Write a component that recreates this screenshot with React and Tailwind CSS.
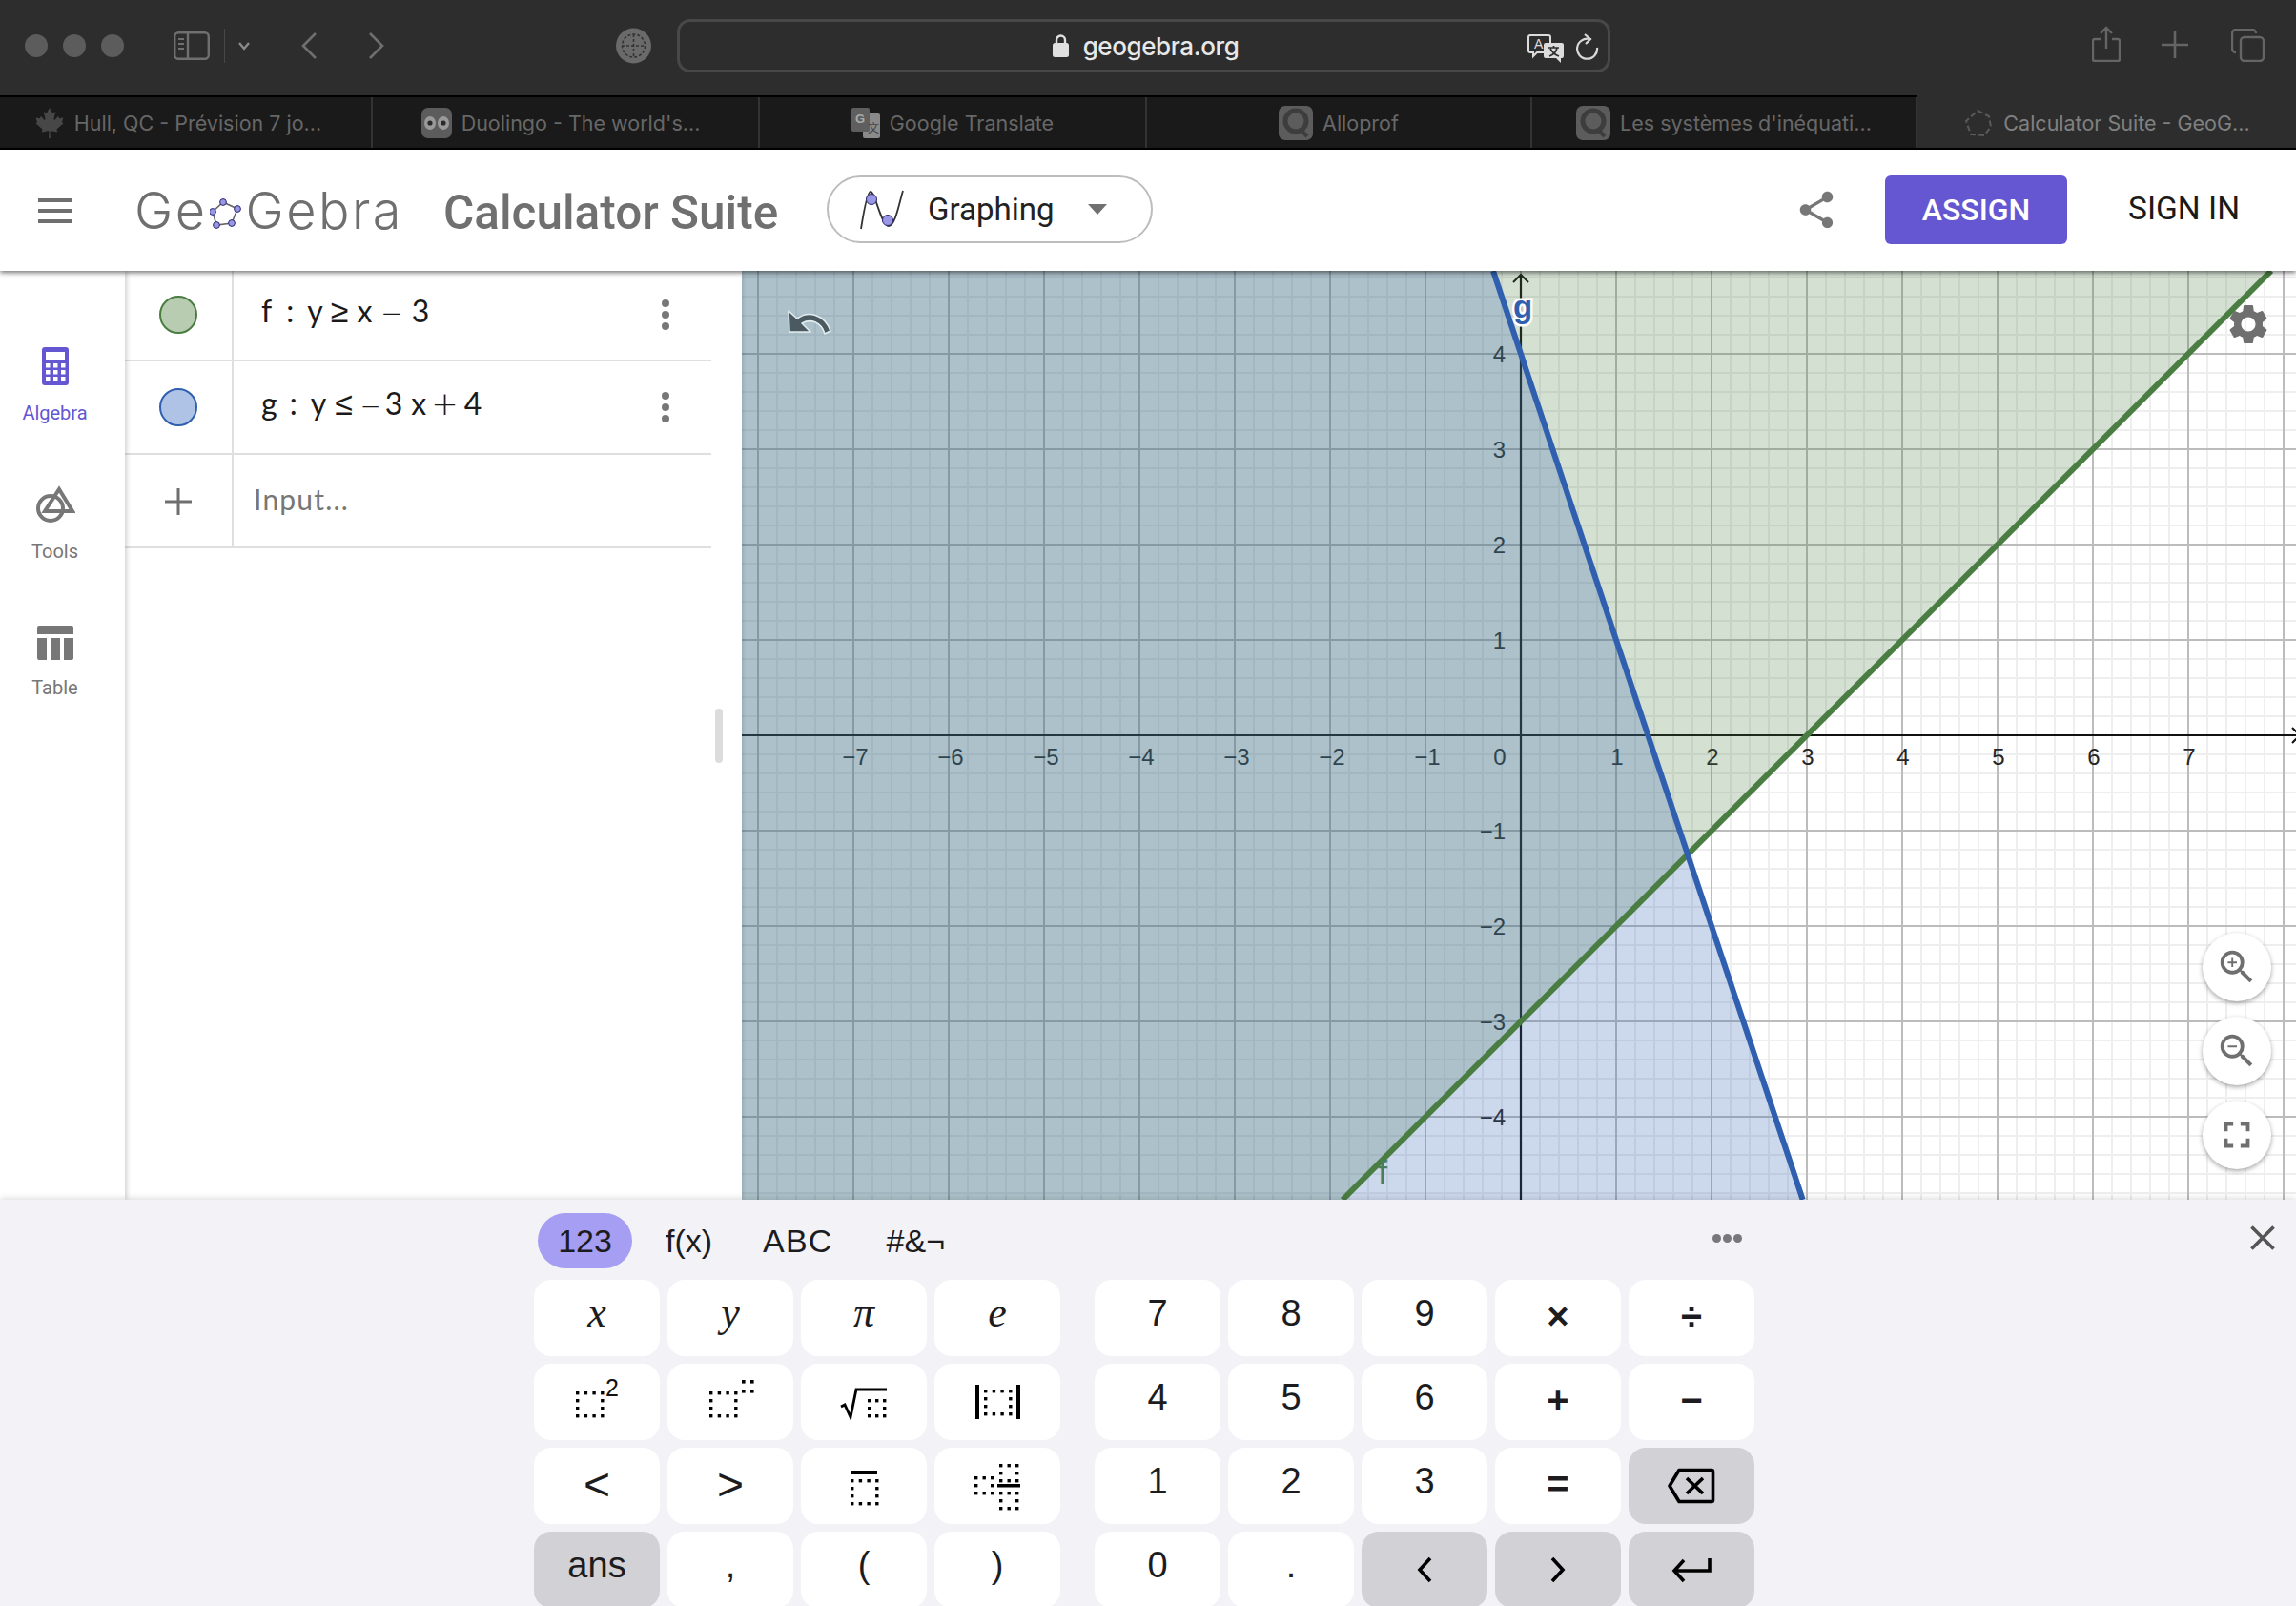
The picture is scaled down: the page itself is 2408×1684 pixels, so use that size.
import React from "react";
import { MdSettings, MdZoomIn, MdZoomOut, MdFullscreen, MdClose, MdShare } from "react-icons/md";
import { FaCanadianMapleLeaf } from "react-icons/fa";

const range = (a, b, s = 1) => { const r = []; for (let i = a; i <= b; i += s) r.push(i); return r; };

function Dots({ x, y, nx = 4, ny = 4, dx = 8.7, dy = 8, s = 3.4 }) {
  const out = [];
  for (let i = 0; i < nx; i++) for (let j = 0; j < ny; j++) {
    if (i === 0 || j === 0 || i === nx - 1 || j === ny - 1) out.push(<rect key={i + "-" + j} x={x + i * dx} y={y + j * dy} width={s} height={s} fill="#000" />);
  }
  return <g>{out}</g>;
}

function KeyGlyph({ children }) {
  return <svg width="132" height="80" viewBox="0 0 132 80">{children}</svg>;
}

const glyphs = {
  sq: <KeyGlyph><Dots x={44} y={29} /><text x={75} y={34} fontSize="25" fontFamily="Liberation Sans" fill="#111">2</text></KeyGlyph>,
  pow: <KeyGlyph><Dots x={44} y={29} /><Dots x={78} y={17} nx={2} ny={2} dx={9} dy={10} s={3.6} /></KeyGlyph>,
  sqrt: <KeyGlyph><path d="M42 45 L46 43 L52 56 L58 27 H90" fill="none" stroke="#000" strokeWidth="2.8" /><Dots x={70} y={37} nx={3} ny={3} dx={8} dy={8} /></KeyGlyph>,
  abs: <KeyGlyph><rect x={43} y={22} width={4} height={36} fill="#000" /><rect x={86} y={22} width={4} height={36} fill="#000" /><Dots x={52} y={27} /></KeyGlyph>,
  over: <KeyGlyph><rect x={52} y={24} width={28} height={4} fill="#000" /><Dots x={52} y={33} /></KeyGlyph>,
  mixed: <KeyGlyph>
    <Dots x={42} y={30} nx={3} ny={3} dx={8.5} dy={8} />
    <Dots x={68} y={17} nx={3} ny={3} dx={8.5} dy={8} />
    <rect x={66} y={38} width={24} height={3.5} fill="#000" />
    <Dots x={68} y={46} nx={3} ny={3} dx={8.5} dy={8} />
  </KeyGlyph>,
  back: <svg width="50" height="38" viewBox="0 0 50 38" fill="none" stroke="#000" strokeWidth="3.6"><path d="M12 2.5 H46 a1.5 1.5 0 0 1 1.5 1.5 V34 a1.5 1.5 0 0 1 -1.5 1.5 H12 L2 19 Z" strokeLinejoin="round" /><path d="M20 11 L37 27 M37 11 L20 27" /></svg>,
  left: <svg width="18" height="28" viewBox="0 0 18 28" fill="none" stroke="#000" strokeWidth="3.6"><path d="M15 2 L4 14 L15 26" /></svg>,
  right: <svg width="18" height="28" viewBox="0 0 18 28" fill="none" stroke="#000" strokeWidth="3.6"><path d="M3 2 L14 14 L3 26" /></svg>,
  enter: <svg width="42" height="28" viewBox="0 0 42 28" fill="none" stroke="#000" strokeWidth="3.6"><path d="M40 2 V15 H4" /><path d="M13 4 L3 15 L13 26" /></svg>,
};

function Key({ k }) {
  const base = "h-20 rounded-[18px] flex items-center justify-center text-[#1c1c1e] font-['Liberation_Sans',sans-serif] " + (k.gray ? "bg-[#d1d1d6]" : "bg-white");
  if (k.g) return <div className={base}>{glyphs[k.g]}</div>;
  if (k.it) return <div className={base + " font-['Liberation_Serif',serif] italic text-[44px] pb-[10px]"}>{k.t}</div>;
  if (k.cmp) return <div className={base + " text-[48px] pb-[2px]"}>{k.t}</div>;
  if (k.op) return <div className={base + " text-[40px] font-bold pb-1"}>{k.t}</div>;
  return <div className={base + " text-[38px] pb-[10px]"}>{k.t}</div>;
}

const leftKeys = [
  { t: "x", it: 1 }, { t: "y", it: 1 }, { t: "π", it: 1 }, { t: "e", it: 1 },
  { g: "sq" }, { g: "pow" }, { g: "sqrt" }, { g: "abs" },
  { t: "<", cmp: 1 }, { t: ">", cmp: 1 }, { g: "over" }, { g: "mixed" },
  { t: "ans", gray: 1 }, { t: "," }, { t: "(" }, { t: ")" },
];
const rightKeys = [
  { t: "7" }, { t: "8" }, { t: "9" }, { t: "×", op: 1 }, { t: "÷", op: 1 },
  { t: "4" }, { t: "5" }, { t: "6" }, { t: "+", op: 1 }, { t: "−", op: 1 },
  { t: "1" }, { t: "2" }, { t: "3" }, { t: "=", op: 1 }, { g: "back", gray: 1 },
  { t: "0" }, { t: "." }, { g: "left", gray: 1 }, { g: "right", gray: 1 }, { g: "enter", gray: 1 },
];

const AlloIcon = () => (
  <svg width="36" height="36" viewBox="0 0 36 36"><rect width="36" height="36" rx="7" fill="#5c5c5c" /><circle cx="18" cy="16" r="11" fill="none" stroke="#3d3d3d" strokeWidth="5" /><path d="M22 24 L30 32" stroke="#3d3d3d" strokeWidth="4" /></svg>
);

const tabs = [
  { w: "w-[391px] pr-[16px]", t: "Hull, QC - Prévision 7 jo...", ic: <FaCanadianMapleLeaf className="text-[#474747] text-[32px]" /> },
  { w: "w-[406px] pr-[10px]", t: "Duolingo - The world's...", ic: (
    <svg width="32" height="32" viewBox="0 0 32 32"><rect width="32" height="32" rx="7" fill="#5c5c5c" /><ellipse cx="9" cy="16" rx="6" ry="7" fill="#9a9a9a" /><ellipse cx="23" cy="16" rx="6" ry="7" fill="#9a9a9a" /><circle cx="9" cy="16" r="2.6" fill="#2a2a2a" /><circle cx="23" cy="16" r="2.6" fill="#2a2a2a" /></svg>
  ) },
  { w: "w-[406px]", t: "Google Translate", ic: (
    <svg width="30" height="32" viewBox="0 0 30 32"><rect x="12" y="6" width="18" height="26" rx="2" fill="#8a8a8a" /><rect width="19" height="25" rx="2" fill="#5f5f5f" /><text x="4" y="16" fontSize="13" fontWeight="700" fontFamily="Liberation Sans" fill="#aaa">G</text><text x="17" y="26" fontSize="12" fontFamily="Noto Sans CJK SC" fill="#444">文</text></svg>
  ) },
  { w: "w-[404px]", t: "Alloprof", ic: <AlloIcon /> },
  { w: "w-[404px]", t: "Les systèmes d'inéquati...", ic: <AlloIcon /> },
  { w: "flex-1", active: 1, t: "Calculator Suite - GeoG...", ic: (
    <svg width="32" height="32" viewBox="0 0 32 32" fill="none"><path d="M15 3 L27 9 L29 20 L22 29 L8 28 L3 14 Z" stroke="#5a5a5a" strokeWidth="2" strokeDasharray="6 3" /></svg>
  ) },
];

function Toolbar() {
  return (
    <div className="h-[100px] bg-[#2d2d2d] flex items-center relative shrink-0 pb-[5px]">
      <div className="flex gap-4 ml-[26px]">
        <div className="w-6 h-6 rounded-full bg-[#5c5c5c]" /><div className="w-6 h-6 rounded-full bg-[#5c5c5c]" /><div className="w-6 h-6 rounded-full bg-[#5c5c5c]" />
      </div>
      <svg className="ml-[52px]" width="38" height="30" viewBox="0 0 38 30" fill="none" stroke="#6f6f6f" strokeWidth="2.4"><rect x="1.2" y="1.2" width="35.6" height="27.6" rx="4" /><path d="M15 1 V29" /><path d="M5 8 H11 M5 13 H11 M5 18 H11" strokeWidth="2" /></svg>
      <div className="ml-[15px] w-px h-[36px] bg-[#474747]" />
      <svg className="ml-[14px]" width="12" height="10" viewBox="0 0 12 10" fill="none" stroke="#8a8a8a" strokeWidth="2.4"><path d="M1 2 L6 8 L11 2" /></svg>
      <svg className="ml-[53px]" width="18" height="30" viewBox="0 0 18 30" fill="none" stroke="#6f6f6f" strokeWidth="2.6"><path d="M16 2 L3 15 L16 28" /></svg>
      <svg className="ml-[53px]" width="18" height="30" viewBox="0 0 18 30" fill="none" stroke="#6f6f6f" strokeWidth="2.6"><path d="M2 2 L15 15 L2 28" /></svg>
      <svg className="ml-[242px]" width="37" height="38" viewBox="0 0 37 38"><circle cx="18.5" cy="19" r="18.5" fill="#6a6a6a" /><g fill="none" stroke="#333" strokeWidth="1.6" strokeDasharray="3 2"><circle cx="18.5" cy="19" r="12" /><path d="M6 19 H31 M18.5 7 V31" /></g></svg>
      <div className="ml-[27px] w-[979px] h-[56px] rounded-[14px] border-[3px] border-[#484848] flex items-center relative">
        <div className="absolute left-0 right-0 top-0 bottom-0 flex items-center justify-center">
          <div className="flex items-center gap-[15px] ml-[4px]">
            <svg width="17" height="25" viewBox="0 0 17 25"><path d="M4 11 V7 a4.5 4.5 0 0 1 9 0 V11" fill="none" stroke="#e0e0e0" strokeWidth="2.4" /><rect y="10" width="17" height="15" rx="2.5" fill="#e0e0e0" /></svg>
            <span className="text-[#e8e8e8] text-[26px] pt-[2px] font-medium font-['Inter',sans-serif] tracking-[-0.4px]">geogebra.org</span>
          </div>
        </div>
        <svg className="absolute left-[889px] top-[13px]" width="40" height="30" viewBox="0 0 40 30"><path d="M3 1 H22 a2 2 0 0 1 2 2 V17 a2 2 0 0 1 -2 2 H10 L6 23 V19 H3 a2 2 0 0 1 -2 -2 V3 a2 2 0 0 1 2 -2 Z" fill="#2d2d2d" stroke="#dcdcdc" strokeWidth="2" /><text x="7" y="15" fontSize="14" fontFamily="Liberation Sans" fill="#dcdcdc">A</text><path d="M19 9 H36 a2 2 0 0 1 2 2 V23 a2 2 0 0 1 -2 2 H35 V30 L30 25 H19 a2 2 0 0 1 -2 -2 V11 a2 2 0 0 1 2 -2 Z" fill="#dcdcdc" /><path d="M22 14 H33 M27.5 12 V14 M31 14 C30 19 26 22 23 23 M24 15 C26 19 30 22 33 23" stroke="#2d2d2d" strokeWidth="1.7" fill="none" /></svg>
        <svg className="absolute left-[940px] top-[12px]" width="24" height="30" viewBox="0 0 24 30" fill="none" stroke="#d8d8d8" strokeWidth="2.2"><path d="M14 6 A10.5 10.5 0 1 0 22 15" /><path d="M9 1 L15 6 L10 11" /></svg>
      </div>
      <svg className="absolute left-[2194px] top-[27px]" width="30" height="38" viewBox="0 0 30 38" fill="none" stroke="#656565" strokeWidth="2.4"><path d="M9 14 H3 a2 2 0 0 0 -2 2 V35 a2 2 0 0 0 2 2 H27 a2 2 0 0 0 2 -2 V16 a2 2 0 0 0 -2 -2 H21" /><path d="M15 24 V2 M9 8 L15 2 L21 8" /></svg>
      <svg className="absolute left-[2267px] top-[33px]" width="28" height="28" viewBox="0 0 28 28" stroke="#656565" strokeWidth="2.6"><path d="M14 0 V28 M0 14 H28" /></svg>
      <svg className="absolute left-[2340px] top-[30px]" width="36" height="35" viewBox="0 0 36 35" fill="none" stroke="#656565" strokeWidth="2.4"><rect x="10" y="9" width="24" height="25" rx="4" /><path d="M5 25 a4 4 0 0 1 -4 -4 V5 a4 4 0 0 1 4 -4 H22 a4 4 0 0 1 4 4" /></svg>
    </div>
  );
}

function TabBar() {
  return (
    <div className="h-[57px] bg-[#1a1a1a] flex border-t-2 border-b-2 border-black shrink-0">
      {tabs.map((t, i) => (
        <div key={i} className={t.w + " flex items-center justify-center gap-[10px] " + (t.active ? "bg-[#2d2d2d] -mt-[2px] pt-[2px] h-[55px]" : "h-full border-r-2 border-[#333]")}>
          {t.ic}
          <span className={"text-[21.5px] pt-[2px] font-['Inter',sans-serif] whitespace-nowrap " + (t.active ? "text-[#808080]" : "text-[#676767]")}>{t.t}</span>
        </div>
      ))}
    </div>
  );
}

function Header() {
  return (
    <div className="h-[127px] bg-white flex items-center relative z-20 shadow-[0_2px_5px_rgba(0,0,0,0.55)] shrink-0">
      <div className="ml-10 w-9 flex flex-col gap-[7px]">
        <div className="h-1 bg-[#6f6f6f]" /><div className="h-1 bg-[#6f6f6f]" /><div className="h-1 bg-[#6f6f6f]" />
      </div>
      <div className="ml-[65px] flex items-center text-[#6f6f6f] font-['Inter',sans-serif] font-light text-[54px] tracking-[2.5px] leading-none relative">
        <span>Ge</span>
        <svg className="mx-[3px] mt-[8px] shrink-0" width="34" height="34" viewBox="0 0 34 34"><path d="M14 4 L29 11 L23 26 L7 28 L3 14 Z" fill="none" stroke="#666" strokeWidth="1.6" /><g fill="#9a97e6" stroke="#2b2b6e" strokeWidth="1"><circle cx="14" cy="4" r="3.4" /><circle cx="29" cy="11" r="3.4" /><circle cx="23" cy="26" r="3.4" /><circle cx="7" cy="28" r="3.4" /><circle cx="3" cy="14" r="3.4" /></g></svg>
        <span>Gebra</span>
      </div>
      <div className="absolute left-[465px] top-[42px] text-[49.5px] leading-none font-medium text-[#707070] font-['Roboto',sans-serif] whitespace-nowrap">Calculator Suite</div>
      <div className="absolute left-[867px] top-[27px] w-[342px] h-[71px] rounded-full border-2 border-[#bdbdbd] flex items-center">
        <svg className="ml-[33px]" width="46" height="42" viewBox="0 0 46 42" fill="none"><path d="M1 41 C4 22 8 2 11 2 C16 2 22 38 30 38 C37 38 41 14 45 1" stroke="#333" strokeWidth="1.8" /><circle cx="12" cy="10" r="5.5" fill="#9a97e6" stroke="#2b2b6e" strokeWidth="1" /><circle cx="29" cy="32" r="5.5" fill="#9a97e6" stroke="#2b2b6e" strokeWidth="1" /></svg>
        <span className="ml-[25px] text-[33px] text-[#222] font-['Roboto',sans-serif]">Graphing</span>
        <div className="ml-[36px] w-0 h-0 border-l-[10px] border-r-[10px] border-t-[11px] border-l-transparent border-r-transparent border-t-[#707070]" />
      </div>
      <MdShare className="absolute left-[1882px] top-[40px] text-[#777]" size={46} />
      <div className="absolute left-[1977px] top-[27px] w-[191px] h-[72px] rounded-md bg-[#6557d2] flex items-center justify-center text-white text-[32px] font-medium font-['Roboto',sans-serif]">ASSIGN</div>
      <div className="absolute left-[2232px] top-[42px] text-[33.5px] leading-10 text-[#1a1a1a] font-['Roboto',sans-serif]">SIGN IN</div>
    </div>
  );
}

function RailItem({ icon, label, active, cls }) {
  return (
    <div className={"flex flex-col items-center w-[115px] " + cls}>
      {icon}
      <span className={"text-[20px] leading-6 font-['Roboto',sans-serif] " + (active ? "text-[#6557d2]" : "text-[#777]")}>{label}</span>
    </div>
  );
}

function Rail() {
  return (
    <div className="w-[131px] shrink-0 bg-white shadow-[2px_0_5px_rgba(0,0,0,0.18)] z-10">
      <RailItem active label="Algebra" cls="pt-[80px] gap-[17px]" icon={
        <svg width="28" height="40" viewBox="0 0 28 40"><rect width="28" height="40" rx="3" fill="#6557d2" /><rect x="4" y="5" width="20" height="8" fill="#fff" /><g fill="#fff">{[17, 24, 31].map(y => [4, 12, 20].map(x => <rect key={x + "-" + y} x={x} y={y} width="4.5" height="4.5" />))}</g></svg>
      } />
      <RailItem label="Tools" cls="pt-[64px] gap-[17px]" icon={
        <svg width="42" height="40" viewBox="0 0 42 40" fill="none" stroke="#777" strokeWidth="4"><circle cx="16" cy="24" r="13" /><path d="M25 4 L39 27 H10 Z" strokeLinejoin="miter" /></svg>
      } />
      <RailItem label="Table" cls="pt-[66px] gap-[17px]" icon={
        <svg width="38" height="36" viewBox="0 0 38 36" fill="#777"><path d="M2 0 H36 a2 2 0 0 1 2 2 V9 H0 V2 a2 2 0 0 1 2 -2Z" /><path d="M0 13 H10 V36 H2 a2 2 0 0 1 -2 -2Z" /><rect x="14" y="13" width="10" height="23" /><path d="M28 13 H38 V34 a2 2 0 0 1 -2 2 H28Z" /></svg>
      } />
    </div>
  );
}

function Kebab({ cls }) {
  return (
    <div className={"absolute left-[563px] flex flex-col gap-1 " + cls}>
      <div className="w-2 h-2 rounded-full bg-[#777]" /><div className="w-2 h-2 rounded-full bg-[#777]" /><div className="w-2 h-2 rounded-full bg-[#777]" />
    </div>
  );
}

const sym = "font-['DejaVu_Sans',sans-serif] font-extralight";

function AlgebraRow({ marble, children, cls }) {
  return (
    <div className={"w-[615px] border-b-2 border-[#dfdfdf] flex relative " + cls}>
      <div className="w-[114px] flex justify-center border-r-2 border-[#dfdfdf]">
        {marble}
      </div>
      {children}
    </div>
  );
}

function Panel() {
  const math = "absolute left-[143px] flex items-baseline text-[32px] leading-10 text-[#1a1a1a] font-['Lato',sans-serif] whitespace-pre";
  return (
    <div className="w-[647px] shrink-0 bg-white relative shadow-[2px_0_3px_rgba(0,0,0,0.1)] z-[5]">
      <AlgebraRow cls="h-[95px]" marble={<div className="mt-[26px] w-10 h-10 rounded-full bg-[#b8ccb1] border-2 border-[#4a7d42]" />}>
        <div className={math + " top-[22px]"}>
          <span>f</span>
          <span className="ml-[15px]">:</span>
          <span className="ml-[14px]">y</span>
          <span className={sym + " ml-[8px] text-[34px]"}>≥</span>
          <span className="ml-[9px]">x</span>
          <span className={sym + " ml-[9px] text-[28px]"}>−</span>
          <span className="ml-[9px]">3</span>
        </div>
        <Kebab cls="top-[30px]" />
      </AlgebraRow>
      <AlgebraRow cls="h-[98px]" marble={<div className="mt-[28px] w-10 h-10 rounded-full bg-[#aec3e6] border-2 border-[#2f5fae]" />}>
        <div className={math + " top-[24px]"}>
          <span>g</span>
          <span className="ml-[13px]">:</span>
          <span className="ml-[14px]">y</span>
          <span className={sym + " ml-[9px] text-[34px]"}>≤</span>
          <span className={sym + " ml-[8px] text-[26px]"}>−</span>
          <span className="ml-[4px]">3</span>
          <span className="ml-[9px]">x</span>
          <span className={sym + " ml-[5px] text-[34px]"}>+</span>
          <span className="ml-[6px]">4</span>
        </div>
        <Kebab cls="top-[32px]" />
      </AlgebraRow>
      <AlgebraRow cls="h-[98px]" marble={<svg className="mt-[35px]" width="28" height="28" viewBox="0 0 28 28" stroke="#6f6f6f" strokeWidth="3"><path d="M14 0 V28 M0 14 H28" /></svg>}>
        <div className="absolute left-[135px] top-[26px] text-[30px] leading-10 tracking-[1.2px] text-[#777] font-['Lato',sans-serif]">Input...</div>
      </AlgebraRow>
      <div className="absolute left-[619px] top-[459px] w-2 h-[57px] rounded bg-[#dcdcdc]" />
    </div>
  );
}

function Graph() {
  const Xs = range(-40, 41).map(i => 1595 + i * 20).filter(x => x >= 778 && x <= 2408);
  const Ys = range(-25, 25).map(i => 771 + i * 20).filter(y => y >= 284 && y <= 1258);
  const lbl = { fontFamily: "Liberation Sans", fontSize: 24, fill: "#262626" };
  return (
    <svg className="block w-full h-full" viewBox="778 284 1630 974" preserveAspectRatio="none">
      <rect x="778" y="284" width="1630" height="974" fill="#fff" />
      {Xs.filter(x => (x - 1595) % 100 !== 0).map(x => <line key={"vm" + x} x1={x} x2={x} y1="284" y2="1258" stroke="#eeeeee" strokeWidth="2" />)}
      {Ys.filter(y => (y - 771) % 100 !== 0).map(y => <line key={"hm" + y} y1={y} y2={y} x1="778" x2="2408" stroke="#eeeeee" strokeWidth="2" />)}
      {Xs.filter(x => (x - 1595) % 100 === 0).map(x => <line key={"v" + x} x1={x} x2={x} y1="284" y2="1258" stroke="#bcbcbc" strokeWidth="2" />)}
      {Ys.filter(y => (y - 771) % 100 === 0).map(y => <line key={"h" + y} y1={y} y2={y} x1="778" x2="2408" stroke="#bcbcbc" strokeWidth="2" />)}
      <line x1="1595" x2="1595" y1="288" y2="1258" stroke="#111" strokeWidth="2.2" />
      <line x1="778" x2="2408" y1="771" y2="771" stroke="#111" strokeWidth="2.2" />
      <path d="M1587 296 L1595 288 L1603 296" fill="none" stroke="#111" strokeWidth="2" />
      <path d="M2404 763 L2412 771 L2404 779" fill="none" stroke="#111" strokeWidth="2" />
      {[-7, -6, -5, -4, -3, -2, -1, 1, 2, 3, 4, 5, 6, 7].map(v => <text key={"xl" + v} x={1595 + v * 100 + (v < 0 ? 2 : 1)} y="802" textAnchor="middle" {...lbl}>{v < 0 ? "−" + -v : v}</text>)}
      <text x="1573" y="802" textAnchor="middle" {...lbl}>0</text>
      {[4, 3, 2, 1, -1, -2, -3, -4].map(v => <text key={"yl" + v} x="1579" y={771 - v * 100 + 9} textAnchor="end" {...lbl}>{v < 0 ? "−" + -v : v}</text>)}
      <polygon points="778,284 2382,284 1408,1258 778,1258" fill="rgba(74,125,66,0.24)" />
      <polygon points="778,284 1566,284 1890.7,1258 778,1258" fill="rgba(50,100,180,0.25)" />
      <line x1="2382" y1="284" x2="1408" y2="1258" stroke="#4a7d42" strokeWidth="6" />
      <line x1="1566" y1="284" x2="1890.7" y2="1258" stroke="#2f5fae" strokeWidth="6" />
      <text x="1597" y="333" textAnchor="middle" fontFamily="Liberation Sans" fontSize="33" fontWeight="700" fill="#2f5fae" stroke="#fff" strokeWidth="5" paintOrder="stroke">g</text>
      <text x="1450" y="1242" textAnchor="middle" fontFamily="Liberation Sans" fontSize="35" fill="#4a7d5a">f</text>
    </svg>
  );
}

function Canvas() {
  const btn = "w-[72px] h-[72px] rounded-full bg-white shadow-[0_2px_5px_rgba(0,0,0,0.35)] flex items-center justify-center text-[#6f6f6f]";
  return (
    <div className="flex-1 relative overflow-hidden">
      <Graph />
      <svg className="absolute left-[48px] top-[41px]" width="46" height="30" viewBox="0 0 46 30">
        <path d="M1 1 L2 23 L24 23 L15 14 C24 9 35 12 39 25 L45 22 C39 5 22 0 10 9 Z" fill="#4a5a60" stroke="#e3edf0" strokeWidth="1.6" strokeLinejoin="round" />
      </svg>
      <MdSettings className="absolute left-[1555px] top-[31px] text-[#6f6f6f]" size={50} />
      <div className="absolute left-[1532px] top-[694px] flex flex-col gap-4">
        <div className={btn}><MdZoomIn size={46} /></div>
        <div className={btn}><MdZoomOut size={46} /></div>
        <div className={btn}><MdFullscreen size={46} /></div>
      </div>
    </div>
  );
}

function Keyboard() {
  const tabCls = "text-[34px] text-[#1c1c1e] font-['Liberation_Sans',sans-serif] leading-none";
  return (
    <div className="h-[426px] bg-[#f2f2f7] relative z-30 overflow-hidden shadow-[0_-2px_6px_rgba(0,0,0,0.12)] shrink-0">
      <div className="h-[84px] relative flex items-center pl-[564px] pt-[2px]">
        <div className={"w-[99px] h-[58px] rounded-full bg-[#a59ef2] flex items-center justify-center " + tabCls}>123</div>
        <div className={"ml-[35px] " + tabCls}>f(x)</div>
        <div className={"ml-[53px] tracking-[1.2px] " + tabCls}>ABC</div>
        <div className={"ml-[56px] " + tabCls}>#&amp;¬</div>
        <div className="absolute left-[1796px] top-[36px] flex gap-[2px]">
          <div className="w-[9px] h-[9px] rounded-full bg-[#77777c]" /><div className="w-[9px] h-[9px] rounded-full bg-[#77777c]" /><div className="w-[9px] h-[9px] rounded-full bg-[#77777c]" />
        </div>
        <MdClose className="absolute left-[2351px] top-[18px] text-[#555]" size={44} />
      </div>
      <div className="flex pl-[560px] gap-9">
        <div className="grid grid-cols-[repeat(4,132px)] auto-rows-[80px] gap-2">
          {leftKeys.map((k, i) => <Key key={i} k={k} />)}
        </div>
        <div className="grid grid-cols-[repeat(5,132px)] auto-rows-[80px] gap-2">
          {rightKeys.map((k, i) => <Key key={i} k={k} />)}
        </div>
      </div>
    </div>
  );
}

export default function App() {
  return (
    <div className="w-[2408px] h-[1684px] flex flex-col overflow-hidden bg-white">
      <Toolbar />
      <TabBar />
      <Header />
      <div className="flex-1 flex min-h-0">
        <Rail />
        <Panel />
        <Canvas />
      </div>
      <Keyboard />
    </div>
  );
}
